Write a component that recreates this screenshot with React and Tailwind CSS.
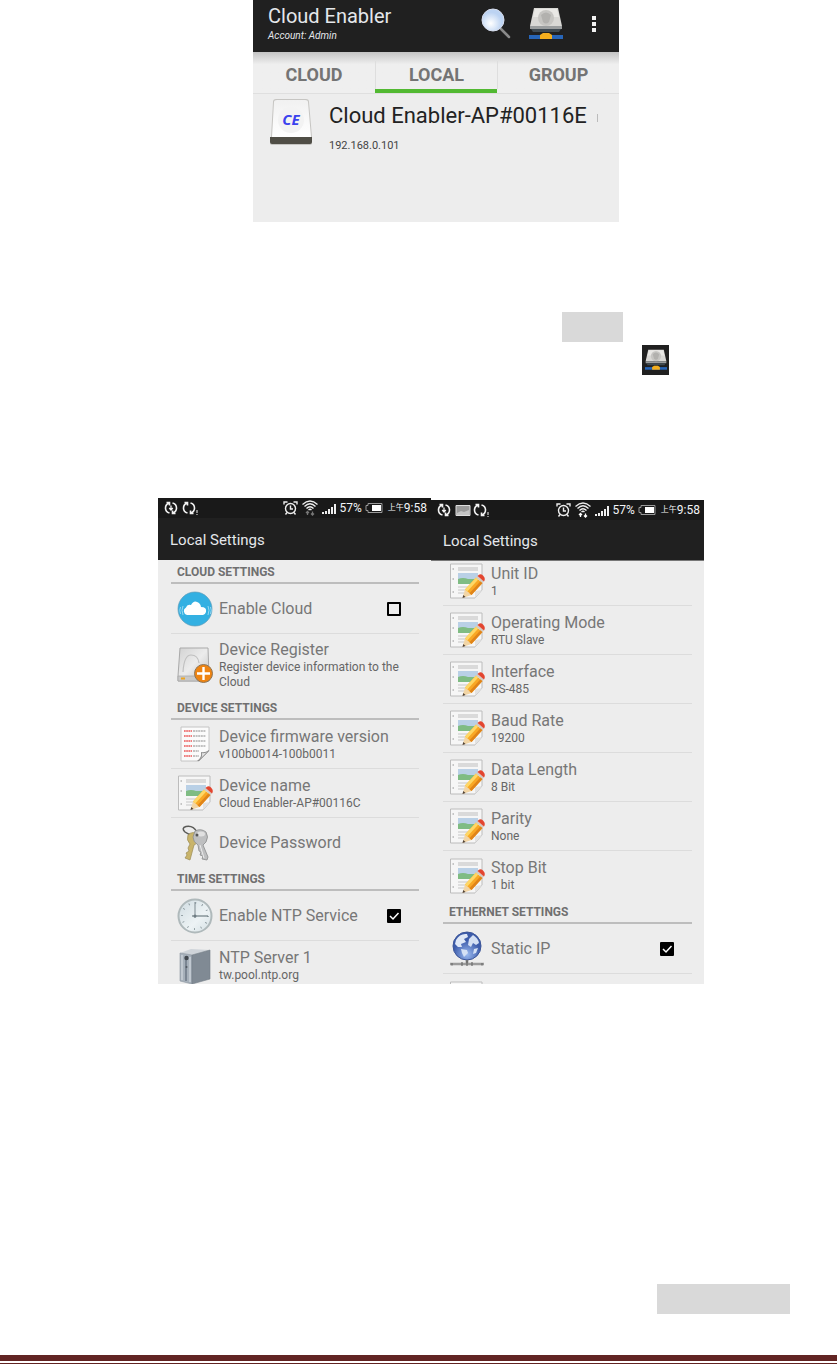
import { useState } from 'react';

function SearchIcon() {
  return (
    <svg className="h-8 w-8" viewBox="0 0 32 32">
      <defs>
        <radialGradient id="lens" cx=".4" cy=".65">
          <stop offset="0" stopColor="#fff" />
          <stop offset="1" stopColor="#bcd3f2" />
        </radialGradient>
      </defs>
      <path d="M20 21 28 29" stroke="#8a8a8a" strokeWidth="2.500" strokeLinecap="round" />
      <circle cx="12" cy="12" r="11" fill="url(#lens)" stroke="#d8deee" strokeWidth="1" />
    </svg>
  );
}

function NetDriveIcon({ className }) {
  return (
    <svg className={className} viewBox="0 0 34 34">
      <path d="M5 1H29L33 19H1Z" fill="#d9d8d5" />
      <path d="M6 2H28L30 10H4Z" fill="#e9e8e5" />
      <ellipse cx="17" cy="11" rx="8" ry="8" fill="#c6c5c2" />
      <path d="M12 8Q17 3 22 8L20 15Q17 18 14 15Z" fill="#b2b1ae" />
      <path d="M1 19H33V22H1Z" fill="#9a9d9e" />
      <path d="M2 22H32L30 25H4Z" fill="#3f4a52" />
      <path d="M0 28H34V32H0Z" fill="#2765b8" />
      <path d="M11 28 14 26H20L23 28V32H11Z" fill="#f3ae1e" />
    </svg>
  );
}

function CeDriveIcon() {
  return (
    <svg className="h-12 w-11" viewBox="0 0 44 48">
      <defs>
        <linearGradient id="ceTop" x2="0" y2="1">
          <stop offset="0" stopColor="#f1f1f1" />
          <stop offset="1" stopColor="#ffffff" />
        </linearGradient>
      </defs>
      <path d="M2 39 4 4Q4 1 7 1H37Q40 1 40 4L43 39V45Q43 47 41 47H3Q1 47 1 45Z" fill="#c6c5c2" />
      <path d="M3 39 5 4Q5 2 8 2H36Q39 2 39 4L42 39Z" fill="url(#ceTop)" />
      <circle cx="22" cy="22" r="13" fill="#f3f3f3" />
      <path d="M1 39H43V44Q43 46 41 46H3Q1 46 1 44Z" fill="#504e46" />
      <text x="22" y="27" textAnchor="middle" fontFamily="Open Sans, sans-serif" fontSize="15" fontWeight="700" fontStyle="italic" fill="#3b42ee">CE</text>
    </svg>
  );
}

function CloudIcon() {
  return (
    <svg className="h-9 w-9" viewBox="0 0 36 36">
      <circle cx="18" cy="18" r="17" fill="#33b0e2" stroke="#5d9bb8" strokeWidth=".7" />
      <path d="M10 24A4 4 0 0 1 9 16.500Q10 13 14 14Q17 8 22 12Q24 14 24 16Q30 16 29 21Q28 24 26 24Z" fill="#fff" />
      <path d="M6 15Q4 19 6 24M3.500 16Q2 19 3.500 23M31 15Q33 19 31 24M33.500 16Q35 19 33.500 23" fill="none" stroke="#a3ddf3" strokeWidth=".9" />
    </svg>
  );
}

function RegisterIcon() {
  return (
    <svg className="h-9 w-9" viewBox="0 0 36 36">
      <defs>
        <linearGradient id="regBody" x2="1" y2="1">
          <stop offset="0" stopColor="#d2d2d2" />
          <stop offset=".5" stopColor="#ececec" />
          <stop offset="1" stopColor="#bdbdbd" />
        </linearGradient>
      </defs>
      <path d="M3 1H31L32 29V34H1V29Z" fill="url(#regBody)" stroke="#a9a9a9" strokeWidth="1" />
      <path d="M1 29H32V34H1Z" fill="#c9c9c9" stroke="#a5a5a5" strokeWidth=".7" />
      <path d="M6 25Q7 8 14 8Q21 8 22 16" fill="none" stroke="#c0c0c0" strokeWidth="1.200" />
      <path d="M4 31.500H8" stroke="#eda520" strokeWidth="2" />
      <circle cx="26.500" cy="26.500" r="9" fill="#ee8412" stroke="#8f7454" strokeWidth="1" />
      <path d="M26.500 20V33M20 26.500H33" stroke="#fff" strokeWidth="2.400" />
    </svg>
  );
}

function FirmwareIcon() {
  return (
    <svg className="h-9 w-9" viewBox="0 0 36 36">
      <path d="M4 1H32V25L22 35H4Z" fill="#fbfbfb" stroke="#c4c4c4" strokeWidth="1" />
      {[5, 10, 15, 20, 25, 30].map((y) => (
        <g key={y} strokeWidth="1.800">
          <path d={`M7 ${y}H15`} stroke="#ef8080" strokeDasharray="1.700 .5" />
          <path d={`M16 ${y}H${y > 24 ? 22 : 29}`} stroke="#c2c2c2" strokeDasharray="2 .6" />
        </g>
      ))}
      <path d="M32 24Q28 27 24 26Q25 32 20 35H22L32 25Z" fill="#8b8b8b" />
      <path d="M31 25Q28 28 25 27Q26 31 22 34Z" fill="#e7e7e7" />
    </svg>
  );
}

function EditIcon() {
  return (
    <svg className="h-9 w-9" viewBox="0 0 36 36">
      <path d="M1.500 1H33V27L26 35H1.500Z" fill="#f6f6f6" stroke="#bcbcbc" strokeWidth="1" />
      <path d="M3.500 6H5M3.500 16H5M3.500 29H5" stroke="#b5b5b5" strokeWidth="1.500" />
      <path d="M9 4H29V8H9Z" fill="#dadada" />
      <path d="M9 10H29V16H9Z" fill="#b9d0e6" />
      <path d="M9 16Q14 14 19 16H29V21H9Z" fill="#7fbc83" />
      <path d="M9 24H20M9 27H17M9 30H15" stroke="#d6d6d6" strokeWidth="1.500" />
      <path d="M33 27 26 28V35Z" fill="#e2e2e2" />
      <path d="M13.500 35 16 26.500 22.500 32Z" fill="#f2d5a5" />
      <path d="M13.500 35 14.300 32 16.500 34Z" fill="#4d4036" />
      <path d="M16 26.500 27 14.500 33.500 20 22.500 32Z" fill="#f9a825" />
      <path d="M16 26.500 27 14.500 29.300 16.500 18.300 28.500Z" fill="#fed766" />
      <path d="M20.500 30.300 31.500 18.300 33.500 20 22.500 32Z" fill="#e08419" />
      <path d="M27 14.500 28.500 13 35 18.500 33.500 20Z" fill="#d3ccc4" />
      <path d="M28.500 13Q31 10 34 12.500Q37 15.500 35 18.500Z" fill="#e3452f" />
    </svg>
  );
}

function KeysIcon() {
  return (
    <svg className="h-9 w-9" viewBox="0 0 36 36">
      <path d="M18 9Q13 11 8 7Q4 3 9 1.500Q16 0 20 7Q21 9 20 11" fill="none" stroke="#5b5b58" strokeWidth="1.500" />
      <path d="M11 10Q16 5 22 10V17L17 20L13 35L8 33L10 30L9 28L12 26L11 23L13 19Q9 15 11 10Z" fill="#c9b46a" stroke="#9b8b55" strokeWidth=".7" />
      <path d="M18 6Q24 3 29 7Q32 12 29 17L26 20L31 32L30 35L25 34L26 31L23 30L24 27L22 26L21 20Q16 17 16 12Z" fill="#bebfc0" stroke="#8a8b8c" strokeWidth=".8" />
      <path d="M23 20 27 33" stroke="#ececec" strokeWidth="1" />
      <ellipse cx="24" cy="9" rx="4" ry="2.500" fill="#e0e0e0" />
      <circle cx="20" cy="10" r="1.500" fill="#555" />
    </svg>
  );
}

function ClockIcon() {
  return (
    <svg className="h-9 w-9" viewBox="0 0 36 36">
      <defs>
        <linearGradient id="clockFace" x2="1" y2="1">
          <stop offset="0" stopColor="#cfdbe0" />
          <stop offset=".6" stopColor="#edf3f5" />
          <stop offset="1" stopColor="#d3dfe3" />
        </linearGradient>
      </defs>
      <circle cx="18" cy="18" r="16.500" fill="url(#clockFace)" stroke="#afb9bb" strokeWidth="2" />
      <circle cx="18" cy="18" r="13" fill="none" stroke="#7e8c92" strokeWidth="2" strokeDasharray=".8 6.007" />
      <path d="M18 20V4" stroke="#7c898f" strokeWidth="1" />
      <path d="M15 18H31" stroke="#6f7d83" strokeWidth="1.200" />
      <circle cx="18" cy="18" r="1.500" fill="#6f7d83" />
    </svg>
  );
}

function ServerIcon() {
  return (
    <svg className="h-9 w-9" viewBox="0 0 36 36">
      <path d="M3 5 14 1 33 2 15 7Z" fill="#cfd4d9" />
      <path d="M3 5 15 7V36L3 33Z" fill="#a6b0ba" stroke="#8a949e" strokeWidth=".6" />
      <path d="M15 7 33 2V31L15 36Z" fill="#808a94" stroke="#747d86" strokeWidth=".6" />
      <path d="M5 7V32M13 9V34" stroke="#c9d0d7" strokeWidth="1.500" />
      <path d="M9 12V33" stroke="#7b8693" strokeWidth="2" />
      <circle cx="9.500" cy="10" r="2.200" fill="#41474d" />
      <circle cx="9.500" cy="19" r="1" fill="#505860" />
    </svg>
  );
}

function GlobeIcon() {
  return (
    <svg className="h-9 w-9" viewBox="0 0 36 36">
      <defs>
        <radialGradient id="globe" cx=".5" cy=".8">
          <stop offset="0" stopColor="#9bbaf0" />
          <stop offset="1" stopColor="#3d5cab" />
        </radialGradient>
      </defs>
      <circle cx="18" cy="15" r="14" fill="url(#globe)" stroke="#3c5598" strokeWidth="1" />
      <path d="M7 9Q11 2 18 3L19 6L15 8L17 11L12 13L13 16L9 16L6 13Z" fill="#dfe8f7" />
      <path d="M20 8 24 4Q29 7 30 12L27 14L24 12L22 16L19 14Z" fill="#d4e0f4" />
      <path d="M12 18 18 19L19 22L15 26L13 22ZM25 18L29 17L27 22L24 23Z" fill="#d5e1f5" />
      <path d="M18 29V33" stroke="#777" strokeWidth="2.500" />
      <path d="M1 33H35" stroke="#9b9b9b" strokeWidth="2.500" />
      <path d="M3 32V34.500M13 31V35M18 30V35M23 31V35M33 32V34.500" stroke="#6c6c6c" strokeWidth="1.200" />
    </svg>
  );
}

function SyncIcon({ alert }) {
  return (
    <svg className="h-4 w-4" viewBox="0 0 16 16" fill="none" stroke="#f2f2f2" strokeWidth="1.600">
      <path d="M5.500 13Q1.500 12 1.500 8Q1.500 4.500 5 3M2.500 2.500H5.500V5.500" />
      <path d="M8.500 3Q12.500 4 12.500 8Q12.500 11.500 9 13M11.500 13.500H8.500V10.500" />
      {alert ? <path d="M15 10V13M15 14V15" strokeWidth="1" /> : <path d="M7 5.500V9M5.200 8 7 10 8.800 8" strokeWidth="1.300" />}
    </svg>
  );
}

function PictureIcon() {
  return (
    <svg className="h-4 w-4" viewBox="0 0 16 16">
      <path d="M1 3.500H15V13.500H1Z" fill="#999" stroke="#ddd" />
      <path d="M2 11 6 9L9 10L14 8V13H2Z" fill="#c4c4c4" />
    </svg>
  );
}

function AlarmIcon() {
  return (
    <svg className="h-4 w-4" viewBox="0 0 16 16" fill="none" stroke="#eee" strokeWidth="1.400">
      <circle cx="7.500" cy="8.500" r="5" />
      <path d="M7.500 5.500V9H10M1 4.500V2H4.500M10.500 2H14V4.500M4 12.500 2.500 14.500M11 12.500 12.500 14.500" />
    </svg>
  );
}

function WifiIcon({ active }) {
  return (
    <svg className="h-4 w-4" viewBox="0 0 16 16" fill="none" stroke="#eee" strokeWidth="1.300">
      <path d="M.500 4.500Q8-2.500 15.500 4.500M2.500 6.500Q8 1 13.500 6.500M4.500 8.500Q8 5 11.500 8.500M6.500 10Q8 8.500 9.500 10" />
      <path d="M5.500 15V12M4 13 5.500 11.500 7 13M10.500 11.500V15M9 13.500 10.500 15 12 13.500" stroke={active ? '#fff' : '#777'} />
    </svg>
  );
}

function SignalIcon() {
  return (
    <svg className="h-4 w-4" viewBox="0 0 16 16" fill="#eee">
      <path d="M1 12H3V14H1ZM4 11H6V14H4ZM7 9H9V14H7ZM10 7H12V14H10ZM13 4H15V14H13Z" />
    </svg>
  );
}

function BatteryIcon() {
  return (
    <svg className="h-4 w-[18px]" viewBox="0 0 18 16">
      <path d="M3 3.500H17V12.500H3V10.500H1V5.500H3Z" fill="none" stroke="#999" />
      <path d="M7 5H16V11H7Z" fill="#fff" />
    </svg>
  );
}

function StatusBar({ picture }) {
  return (
    <div className="flex h-5 items-center justify-between bg-[#191919] pl-1.5 pr-1 text-xs leading-5 text-gray-100">
      <div className="flex gap-0.5">
        <SyncIcon />
        {picture && <PictureIcon />}
        <SyncIcon alert />
      </div>
      <div className="flex items-center gap-[3px]">
        <AlarmIcon />
        <WifiIcon active={picture} />
        <SignalIcon />
        <span>57%</span>
        <BatteryIcon />
        <span className="flex items-center pl-0.5"><span className="text-[8px]">上午</span><span>9:58</span></span>
      </div>
    </div>
  );
}

function Section({ title }) {
  return (
    <h2 className="flex h-6 items-center border-b-2 border-[#bdbdbd] pl-1.5 pt-0.5 text-xs font-bold text-[#707070]">{title}</h2>
  );
}

function Row({ icon, title, detail, last }) {
  return (
    <button
      type="button"
      className={`flex min-h-[49px] w-full items-center gap-1.5 pl-1.5 text-left ${last ? '' : 'border-b border-[#dcdcdc]'}`}
    >
      <span className="shrink-0">{icon}</span>
      <span className="min-w-0">
        <span className="block text-base leading-5 text-[#777]">{title}</span>
        {detail && <span className="block text-xs leading-[15px] text-[#666]">{detail}</span>}
      </span>
    </button>
  );
}

function CheckRow({ icon, title, defaultChecked = false }) {
  const [checked, setChecked] = useState(defaultChecked);
  return (
    <label className="flex h-[50px] items-center gap-1.5 border-b border-[#dcdcdc] pl-1.5 pr-[18px]">
      <span className="shrink-0">{icon}</span>
      <span className="flex-1 text-base leading-5 text-[#777]">{title}</span>
      <span className="grid">
        <input
          type="checkbox"
          checked={checked}
          onChange={(e) => setChecked(e.target.checked)}
          className="col-start-1 row-start-1 h-3.5 w-3.5 appearance-none rounded-[1px] border-2 border-black checked:bg-black"
        />
        {checked && (
          <svg className="pointer-events-none col-start-1 row-start-1 h-3.5 w-3.5" viewBox="0 0 14 14">
            <path d="M3 7 6 10 11.500 4" fill="none" stroke="#fff" strokeWidth="1.500" />
          </svg>
        )}
      </span>
    </label>
  );
}

const serialSettings = [
  ['Unit ID', '1'],
  ['Operating Mode', 'RTU Slave'],
  ['Interface', 'RS-485'],
  ['Baud Rate', '19200'],
  ['Data Length', '8 Bit'],
  ['Parity', 'None'],
  ['Stop Bit', '1 bit'],
];

const tabs = ['CLOUD', 'LOCAL', 'GROUP'];

function DeviceList() {
  const [tab, setTab] = useState('LOCAL');
  return (
    <section className="min-h-[222px] bg-[#ededed]">
      <header className="flex h-[52px] items-center justify-between bg-[#202020] pl-[15px] pr-2.5 text-gray-200">
        <div className="pb-1">
          <h1 className="text-xl leading-6">Cloud Enabler</h1>
          <p className="text-[10px] italic leading-4">Account: Admin</p>
        </div>
        <div className="flex items-center gap-4 pb-1">
          <button type="button" aria-label="Search"><SearchIcon /></button>
          <button type="button" aria-label="Add device"><NetDriveIcon className="h-[34px] w-[34px]" /></button>
          <button type="button" aria-label="Menu" className="grid w-[30px] justify-center">
            <svg className="h-5 w-1" viewBox="0 0 4 20" fill="#f2f2f2">
              <path d="M0 2H4V6H0ZM0 8H4V12H0ZM0 14H4V18H0Z" />
            </svg>
          </button>
        </div>
      </header>
      <nav className="grid h-[42px] grid-cols-3 border-b border-[#dfdfdf] bg-linear-to-b from-[#c4c4c4] via-[#efefef] via-30% to-[#efefef]">
        {tabs.map((name, i) => (
          <button
            key={name}
            type="button"
            onClick={() => setTab(name)}
            className={`flex flex-col justify-end text-lg font-bold leading-7 text-[#747474] ${tab === name ? 'border-b-4 border-[#52b932]' : 'border-b-4 border-transparent'}`}
          >
            <span className={`w-full ${i > 0 ? 'border-l border-[#dedede]' : ''}`}>{name}</span>
          </button>
        ))}
      </nav>
      <div className="flex gap-4 pl-4 pt-1">
        <CeDriveIcon />
        <div>
          <div className="flex items-center gap-2.5">
            <h2 className="pt-1 text-[22px] leading-7 text-[#222]">Cloud Enabler-AP#00116E</h2>
            <span className="mt-2 h-2 w-px bg-[#bbb]" />
          </div>
          <p className="pt-1.5 text-[11px] leading-5 text-[#444]">192.168.0.101</p>
        </div>
      </div>
    </section>
  );
}

function App() {
  return (
    <div className="flex min-h-screen flex-col bg-white font-[Roboto,'Noto_Sans_CJK_TC',sans-serif]">
      <main className="flex-1 pl-[158px] pr-[133px]">
        <div className="pl-[95px] pr-[85px]">
          <DeviceList />
        </div>

        <div className="flex flex-col items-end pt-[90px]">
          <div className="mr-[81px] h-[30px] w-[61px] bg-[#d9d9d9]" />
          <div className="mr-[35px] mt-[3px] grid h-[30px] w-[27px] place-items-center bg-[#202020]">
            <NetDriveIcon className="h-[22px] w-[22px]" />
          </div>
        </div>

        <div className="flex items-start pt-[123px]">
          <section className="h-[486px] flex-1 overflow-hidden bg-[#ededed]">
            <StatusBar />
            <h1 className="flex h-[42px] items-center bg-[#202020] pl-3 pt-0.5 text-[15px] text-gray-200">Local Settings</h1>
            <div className="pl-[13px] pr-3">
              <Section title="CLOUD SETTINGS" />
              <CheckRow icon={<CloudIcon />} title="Enable Cloud" />
              <div className="py-1.5">
                <Row icon={<RegisterIcon />} title="Device Register" detail="Register device information to the Cloud" last />
              </div>
              <Section title="DEVICE SETTINGS" />
              <Row icon={<FirmwareIcon />} title="Device firmware version" detail="v100b0014-100b0011" />
              <Row icon={<EditIcon />} title="Device name" detail="Cloud Enabler-AP#00116C" />
              <Row icon={<KeysIcon />} title="Device Password" last />
              <Section title="TIME SETTINGS" />
              <CheckRow icon={<ClockIcon />} title="Enable NTP Service" defaultChecked />
              <Row icon={<ServerIcon />} title="NTP Server 1" detail="tw.pool.ntp.org" last />
            </div>
          </section>

          <section className="mt-0.5 h-[484px] flex-1 overflow-hidden bg-[#ededed]">
            <div className="relative z-10 border-b border-[#777]">
              <StatusBar picture />
              <h1 className="flex h-10 items-center bg-[#202020] pl-3 pt-0.5 text-[15px] text-gray-200">Local Settings</h1>
            </div>
            {/* the list is scrolled slightly under the title bar */}
            <div className="-mt-1 px-3">
              {serialSettings.map(([title, detail], i) => (
                <Row key={title} icon={<EditIcon />} title={title} detail={detail} last={i === serialSettings.length - 1} />
              ))}
              <Section title="ETHERNET SETTINGS" />
              <CheckRow icon={<GlobeIcon />} title="Static IP" defaultChecked />
              <Row icon={<EditIcon />} last />
            </div>
          </section>
        </div>
      </main>

      <div className="flex justify-end pb-[41px] pr-[47px]">
        <div className="h-[30px] w-[133px] bg-[#d9d9d9]" />
      </div>
      <footer className="h-[9px] border-b border-t-[6px] border-[#622423]" />
    </div>
  );
}

export default App;
